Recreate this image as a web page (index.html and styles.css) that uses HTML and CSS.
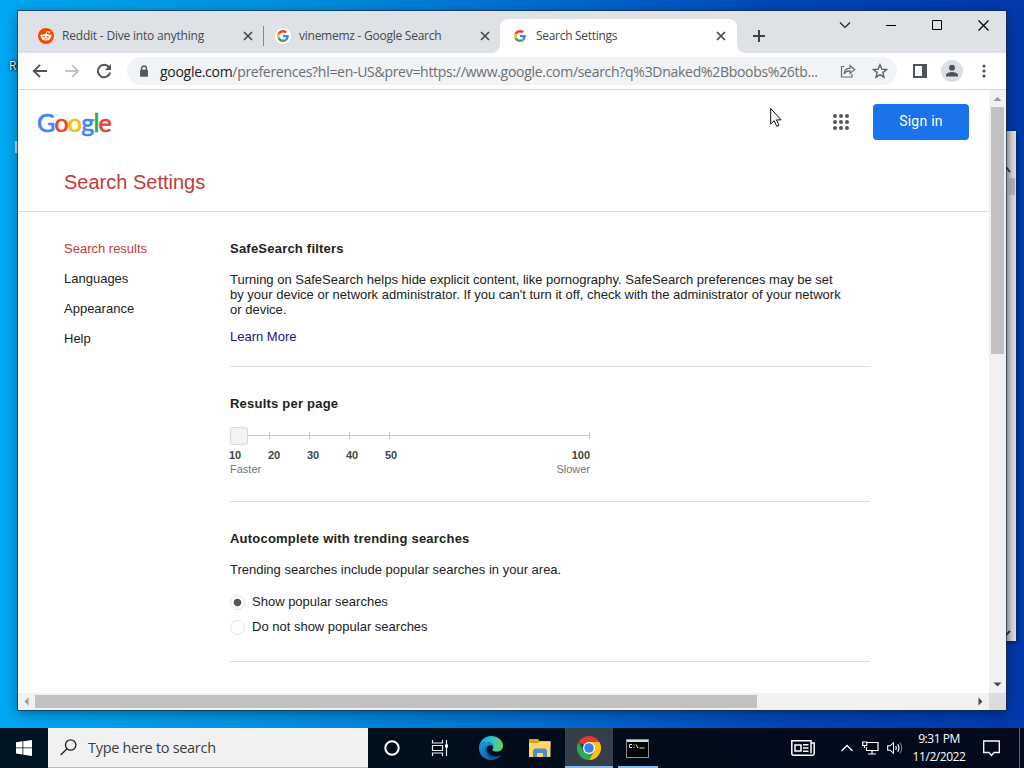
FILE: index.html
```html
<!DOCTYPE html>
<html lang="en">
<head>
    <meta charset="UTF-8">
    <title>Search Settings</title>
    <link rel="stylesheet" href="styles.css">
</head>
<body>
<svg width="0" height="0" class="defs">
    <symbol id="g" viewBox="0 0 48 48">
        <path fill="#EA4335" d="M24 9.5c3.54 0 6.71 1.22 9.21 3.6l6.85-6.85C35.9 2.38 30.47 0 24 0 14.62 0 6.51 5.38 2.56 13.22l7.98 6.19C12.43 13.72 17.74 9.5 24 9.5z"/>
        <path fill="#4285F4" d="M46.98 24.55c0-1.57-.15-3.09-.38-4.55H24v9.02h12.94c-.58 2.96-2.26 5.48-4.78 7.18l7.73 6c4.51-4.18 7.09-10.36 7.09-17.65z"/>
        <path fill="#FBBC05" d="M10.53 28.59c-.48-1.45-.76-2.99-.76-4.59s.27-3.14.76-4.59l-7.98-6.19C.92 16.46 0 20.12 0 24c0 3.88.92 7.54 2.56 10.78l7.97-6.19z"/>
        <path fill="#34A853" d="M24 48c6.48 0 11.93-2.13 15.89-5.81l-7.73-6c-2.15 1.45-4.92 2.3-8.16 2.3-6.26 0-11.57-4.22-13.47-9.91l-7.98 6.19C6.51 42.62 14.62 48 24 48z"/>
    </symbol>
    <symbol id="x" viewBox="0 0 10 10"><path d="M1 1l8 8M9 1l-8 8" stroke="#45494d" stroke-width="1.7"/></symbol>
</svg>

<div class="desktop">
    <span class="desktop-label">R</span>
    <span class="desktop-mark"></span>

    <div class="back-window">
        <svg class="back-up" width="10" height="12" viewBox="0 0 10 12"><path d="M0 3l4 5" stroke="#333" stroke-width="2"/></svg>
        <div class="back-thumb"></div>
        <svg class="back-down" width="10" height="12" viewBox="0 0 10 12"><path d="M0 8l4-4" stroke="#333" stroke-width="2"/></svg>
    </div>

    <div class="window">
        <div class="tabs">
            <div class="tab sep">
                <svg width="16" height="16" viewBox="0 0 16 16"><circle cx="8" cy="8" r="8" fill="#ff4500"/><path d="M8.2 6l.6-2.6 2 .5" stroke="#fff" stroke-width=".8" fill="none"/><circle cx="11.2" cy="4" r="1" fill="#fff"/><circle cx="3.6" cy="7.8" r="1.3" fill="#fff"/><circle cx="12.4" cy="7.8" r="1.3" fill="#fff"/><ellipse cx="8" cy="9.2" rx="4.6" ry="3.3" fill="#fff"/><circle cx="6.2" cy="8.6" r=".9" fill="#ff4500"/><circle cx="9.8" cy="8.6" r=".9" fill="#ff4500"/><path d="M6.2 10.6q1.8 1.1 3.6 0" stroke="#ff4500" stroke-width=".6" fill="none"/></svg>
                <span class="tab-title t1">Reddit - Dive into anything</span>
                <svg width="10" height="10"><use href="#x"/></svg>
            </div>
            <div class="tab">
                <span class="g-badge"><svg width="12" height="12"><use href="#g"/></svg></span>
                <span class="tab-title t2">vinememz - Google Search</span>
                <svg width="10" height="10"><use href="#x"/></svg>
            </div>
            <div class="tab active">
                <span class="g-badge"><svg width="12" height="12"><use href="#g"/></svg></span>
                <span class="tab-title t3">Search Settings</span>
                <svg width="10" height="10"><use href="#x"/></svg>
            </div>
            <svg class="new-tab" width="12" height="12" viewBox="0 0 12 12"><path d="M6 0v12M0 6h12" stroke="#3c4043" stroke-width="2"/></svg>
            <div class="controls">
                <span><svg width="12" height="12" viewBox="0 0 12 12"><path d="M1 3.5l5 5 5-5" fill="none" stroke="#222" stroke-width="1.2"/></svg></span>
                <span><svg width="10" height="10" viewBox="0 0 10 10"><path d="M0 5.5h10" stroke="#000"/></svg></span>
                <span><svg width="10" height="10" viewBox="0 0 10 10"><path d="M.5.5h9v9h-9z" fill="none" stroke="#000"/></svg></span>
                <span><svg width="11" height="11" viewBox="0 0 11 11"><path d="M.5.5l10 10M10.5.5l-10 10" stroke="#000" stroke-width="1.2"/></svg></span>
            </div>
        </div>

        <div class="toolbar">
            <span class="tool"><svg width="16" height="16" viewBox="0 0 16 16"><path d="M15 8H2M8 1.8L1.8 8 8 14.2" fill="none" stroke="#4f5357" stroke-width="1.9"/></svg></span>
            <span class="tool"><svg width="16" height="16" viewBox="0 0 16 16"><path d="M1 8h13M8 1.8L14.2 8 8 14.2" fill="none" stroke="#c0c3c6" stroke-width="1.9"/></svg></span>
            <span class="tool"><svg width="16" height="16" viewBox="0 0 16 16"><path d="M13 4.2A6.2 6.2 0 1 0 14.1 9.6" fill="none" stroke="#4f5357" stroke-width="2"/><path d="M15 1v6H9z" fill="#4f5357"/></svg></span>
            <div class="omnibox">
                <svg class="lock" width="10" height="13" viewBox="0 0 10 13"><path d="M2.6 5.5V3.4a2.4 2.4 0 0 1 4.8 0v2.1" fill="none" stroke="#55595d" stroke-width="1.4"/><rect x="1" y="4.8" width="8" height="7" rx="1" fill="#55595d"/></svg>
                <span class="url"><b>google.com</b>/preferences?hl=en-US&amp;prev=https://www.google.com/search?q%3Dnaked%2Bboobs%26tb...</span>
                <span class="tool"><svg width="16" height="16" viewBox="0 0 16 16"><path d="M4.500 3.500H1.500v10.500h10.500V11" fill="none" stroke="#666a6e" stroke-width="1.2"/><path d="M4 11c.5-4 2.500-5.700 6-5.900V2.500L14.700 6.500 10 10.400V7.900C7.300 7.900 5.500 8.700 4 11z" fill="none" stroke="#666a6e" stroke-width="1.2"/></svg></span>
                <span class="tool"><svg width="16" height="16" viewBox="0 0 16 16"><path d="M8 1.800l1.800 4.300 4.700.4-3.600 3.100 1.100 4.600L8 11.700l-4 2.500 1.100-4.600L1.500 6.500l4.700-.4z" fill="none" stroke="#5f6368" stroke-width="1.400"/></svg></span>
            </div>
            <span class="tool"><svg width="14" height="14" viewBox="0 0 14 14"><path d="M1 1h12v12H1z" fill="none" stroke="#4f5357" stroke-width="2"/><path d="M9 1h4v12H9z" fill="#4f5357"/></svg></span>
            <span class="tool"><svg width="22" height="22" viewBox="0 0 22 22"><circle cx="11" cy="11" r="11" fill="#dcdfe5"/><circle cx="11" cy="7.700" r="3" fill="#4b5361"/><path d="M5 16.500v-1.500c0-2 4-3 6-3s6 1 6 3v1.500z" fill="#4b5361"/></svg></span>
            <span class="tool"><svg width="4" height="14" viewBox="0 0 4 14"><g fill="#4f5357"><circle cx="2" cy="2" r="1.600"/><circle cx="2" cy="7" r="1.600"/><circle cx="2" cy="12" r="1.600"/></g></svg></span>
        </div>

        <div class="viewport">
            <div class="page">
                <div class="header">
                    <div class="logo"><span class="blue">G</span><span class="red">o</span><span class="yellow">o</span><span class="blue">g</span><span class="green">l</span><span class="red">e</span></div>
                    <div class="apps"><i></i><i></i><i></i><i></i><i></i><i></i><i></i><i></i><i></i></div>
                    <a class="sign-in">Sign in</a>
                </div>
                <h1>Search Settings</h1>
                <div class="columns">
                    <div class="nav">
                        <a class="current">Search results</a>
                        <a>Languages</a>
                        <a>Appearance</a>
                        <a>Help</a>
                    </div>
                    <div class="settings">
                        <div class="section safe">
                            <h2>SafeSearch filters</h2>
                            <p>Turning on SafeSearch helps hide explicit content, like pornography. SafeSearch preferences may be set<br>by your device or network administrator. If you can't turn it off, check with the administrator of your network<br>or device.</p>
                            <a class="more">Learn More</a>
                        </div>
                        <div class="section results">
                            <h2>Results per page</h2>
                            <svg class="slider" width="360" height="18" viewBox="0 0 360 18"><path d="M18 8.500h342M39.500 5v7M79.500 5v7M119.500 5v7M159.500 5v7M359.500 5v7" stroke="#c8c8c8" fill="none"/><rect x=".5" y=".5" width="17" height="17" rx="1.500" fill="#f3f3f3" stroke="#d8d8d8"/></svg>
                            <div class="numbers"><b>10</b><b>20</b><b>30</b><b>40</b><b>50</b><b>100</b></div>
                            <div class="speeds"><span>Faster</span><span>Slower</span></div>
                        </div>
                        <div class="section auto">
                            <h2>Autocomplete with trending searches</h2>
                            <p>Trending searches include popular searches in your area.</p>
                            <div class="option"><span class="radio on"></span>Show popular searches</div>
                            <div class="option"><span class="radio"></span>Do not show popular searches</div>
                        </div>
                    </div>
                </div>
            </div>
            <div class="vscroll">
                <svg width="9" height="17" viewBox="0 0 9 17"><path d="M.5 11l4-4 4 4z" fill="#9a9a9a"/></svg>
                <div class="thumb"></div>
                <svg width="9" height="17" viewBox="0 0 9 17"><path d="M.5 6.500l4 4 4-4z" fill="#4a4a4a"/></svg>
            </div>
            <div class="hscroll">
                <svg width="17" height="9" viewBox="0 0 17 9"><path d="M10.500.5l-4 4 4 4z" fill="#9a9a9a"/></svg>
                <div class="thumb"></div>
                <svg width="17" height="9" viewBox="0 0 17 9"><path d="M6.500.5l4 4-4 4z" fill="#4a4a4a"/></svg>
            </div>
            <div class="corner"></div>
        </div>
    </div>

    <svg class="cursor" width="13" height="20" viewBox="0 0 13 20"><path d="M.7 1.500v15.500l3.500-3.300 2.500 5.600 2.300-1-2.500-5.400h4.700z" fill="#fff" stroke="#111"/></svg>

    <div class="taskbar">
        <div class="start"><svg width="16" height="16" viewBox="0 0 16 16"><path d="M0 2.200L6.500 1.300V7.500H0zM7.300 1.200L16 0v7.500H7.300zM0 8.300h6.500v6.200L0 13.600zM7.300 8.300H16V16l-8.700-1.300z" fill="#fff"/></svg></div>
        <div class="search">
            <svg width="17" height="17" viewBox="0 0 17 17"><circle cx="10.700" cy="6" r="5.200" fill="none" stroke="#222" stroke-width="1.300"/><path d="M7 9.800L.7 16" stroke="#222" stroke-width="1.300"/></svg>
            <span>Type here to search</span>
        </div>
        <div class="task"><svg width="16" height="16" viewBox="0 0 16 16"><circle cx="8" cy="8" r="6.700" fill="none" stroke="#fff" stroke-width="2"/></svg></div>
        <div class="task"><svg width="18" height="18" viewBox="0 0 18 18"><g fill="none" stroke="#e8ecef" stroke-width="1.200"><path d="M1.500 1v3h10V1M1.500 17v-3h10v3M1.500 6.500h10v5h-10zM15.500 1v16"/></g><path d="M14 5.500h3v3h-3z" fill="#fff"/></svg></div>
        <div class="task edge"><svg width="24" height="24" viewBox="0 0 24 24">
            <defs>
                <linearGradient id="eg" x1="0" y1=".3" x2="1" y2=".4"><stop offset="0" stop-color="#1e9fe0"/><stop offset=".5" stop-color="#2cc1cf"/><stop offset="1" stop-color="#63d663"/></linearGradient>
                <linearGradient id="eb" x1="0" y1="0" x2=".6" y2="1"><stop offset="0" stop-color="#1b9de2"/><stop offset="1" stop-color="#0f5cae"/></linearGradient>
            </defs>
            <path d="M0 12C0 5 5.500 0 12 0c7 0 12 4.500 12 9.600 0 4-3 6-6.400 6-2.800 0-4.300-.9-4.300-1.900 0-.7 1-1.100 1-2.700C14.300 8.300 11.500 6 7.500 6 4 6 1 8 0 12z" fill="url(#eg)"/>
            <path d="M0 12c.7-4 4-6 7.500-6 3.600 0 6.500 2 6.800 4.500-.6-.9-1.700-1.300-2.900-1.300-2.300 0-3.900 2-3.900 4.600 0 4.600 4 7.700 8.200 7.500 2.500 0 4.700-1 6.600-2.500C20 22 16.500 24 12 24 5 24 0 18.500 0 12z" fill="url(#eb)"/>
            <path d="M7.500 8.500c-3.400 5.500-.5 12.500 4.500 15.500 4 0 7.500-1.500 10.300-5.200-3 2-7.300 2-10.300.2-4-2.500-5.200-6.500-4.500-10.500z" fill="#124f9b" opacity=".75"/>
        </svg></div>
        <div class="task"><svg width="22" height="18" viewBox="0 0 22 18"><path d="M0 0h9l1.500 2H21.500v5H0z" fill="#dba520"/><path d="M0 4h10l1-1.500h10.500V18H0z" fill="#fcd668"/><path d="M4 18v-6.500l1.500-2h11l1.500 2V18h-4v-4H8v4z" fill="#4a90cf"/></svg></div>
        <div class="task open selected"><svg width="24" height="24" viewBox="0 0 24 24"><path d="M12 12L1.600 6A12 12 0 0 1 22.400 6z" fill="#e33b2e"/><path d="M12 12V6h10.400A12 12 0 0 1 12 24l5.200-9z" fill="#fbc116"/><path d="M12 12l5.200 3L12 24A12 12 0 0 1 1.600 6l5.200 9z" fill="#2da94f"/><circle cx="12" cy="12" r="6" fill="#fff"/><circle cx="12" cy="12" r="4.800" fill="#3b7ded"/></svg></div>
        <div class="task open cmd"><svg width="23" height="19" viewBox="0 0 23 19"><rect x=".5" y=".5" width="22" height="18" fill="#050505" stroke="#8c9092"/><path d="M1 1h21v2H1z" fill="#d8dadb"/><path d="M6 5.500H3.500v3H6M8 5.500v1M8 8v1M10 5.500l2 3.500M13.500 9h5" fill="none" stroke="#ddd"/></svg></div>

        <div class="tray">
            <svg class="news" width="24" height="16" viewBox="0 0 24 16"><g fill="none" stroke="#fff" stroke-width="1.500"><path d="M20 3h3.200v10.500q0 1.700-1.700 1.700h-19Q.8 15.200.8 13.500V.8H20v12.500"/><path d="M4 5h6v6H4zM12 4.800h5.500M12 8h5.500M12 11.200h5.500"/></g></svg>
            <svg class="up" width="12" height="8" viewBox="0 0 12 8"><path d="M.5 7L6 1.500 11.500 7" fill="none" stroke="#fff" stroke-width="1.300"/></svg>
            <svg class="net" width="17" height="14" viewBox="0 0 17 14"><path d="M5 1.500h11v8H4.500V6M10 9.500V13M6 13h8M.7 1h4v3.500h-4zM2.500 4.500V7" fill="none" stroke="#fff" stroke-width="1.200"/></svg>
            <svg class="vol" width="16" height="14" viewBox="0 0 16 14"><path d="M.7 4.800h2.500L6.500 1.700v10.600L3.200 9.200H.7z" fill="none" stroke="#fff" stroke-width="1.100"/><path d="M8.700 5q1.300 2 0 4M10.700 3.300q2.500 3.700 0 7.400" fill="none" stroke="#fff" stroke-width="1.200"/><path d="M13 1.700q3.500 5.300 0 10.600" fill="none" stroke="#8b949d"/></svg>
            <div class="clock"><div>9:31 PM</div><div class="date">11/2/2022</div></div>
            <svg class="note" width="17" height="17" viewBox="0 0 17 17"><path d="M.7 1h15.600v11.500H11L8.500 15.500 6 12.500H.7z" fill="none" stroke="#fff" stroke-width="1.300"/></svg>
            <span class="peek"></span>
        </div>
    </div>
</div>
</body>
</html>
```
FILE: styles.css
```css
* { box-sizing: border-box; }
body { margin: 0; font-family: "Liberation Sans", Arial, sans-serif; font-size: 13px; color: #222; }
svg { display: block; flex: none; }
.defs { position: absolute; }

.desktop { position: relative; width: 1024px; height: 768px; overflow: hidden; background: linear-gradient(90deg, #00a8f3 0, #009ee8 120px, #008fdf 300px, #0064ca 600px, #0046b7 780px, #0039ab 1024px); }
.desktop-label { position: absolute; left: 9px; top: 58px; color: #fff; font: 12px/16px "Open Sans", sans-serif; text-shadow: 1px 1px 2px #000, 0 0 3px #000; }
.desktop-mark { position: absolute; left: 15px; top: 141px; width: 3px; height: 12px; background: #b5dcf3; }
.back-window { position: absolute; left: 1000px; top: 131px; width: 16px; height: 510px; padding: 33px 0 2px 6px; display: flex; flex-direction: column; background: linear-gradient(90deg, #aaa 6px, #d8d8d8 12px, #e2e2e2); box-shadow: 1px 1px 5px rgba(0, 0, 0, 0.5); }
.back-thumb { height: 17px; margin: 2px 1px 0 0; background: #b5b5b5; }
.back-down { margin-top: auto; }

/* browser window */
.window { position: absolute; left: 18px; top: 11px; width: 988px; height: 699px; background: #fff; box-shadow: 0 0 0 1px rgba(20, 40, 60, 0.65), 0 3px 12px rgba(0, 0, 0, 0.4); }
.tabs { display: flex; align-items: flex-end; height: 42px; padding-left: 8px; background: #dee1e6; }
.tab { position: relative; display: flex; align-items: center; width: 237px; height: 34px; padding: 0 10px 0 12px; }
.sep::after { content: ""; position: absolute; right: -1px; top: 7px; width: 1px; height: 20px; background: #85888c; }
.active { padding-right: 11px; background: #fff; border-radius: 8px 8px 0 0; }
.active::before, .active::after { content: ""; position: absolute; bottom: 0; width: 8px; height: 8px; }
.active::before { left: -8px; background: radial-gradient(circle at 0 0, #dee1e6 7.5px, #fff 8px); }
.active::after { right: -8px; background: radial-gradient(circle at 100% 0, #dee1e6 7.5px, #fff 8px); }
.g-badge { display: flex; align-items: center; justify-content: center; width: 16px; height: 16px; border-radius: 8px; background: #fff; }
.tab-title { flex: 1; margin-left: 8px; font: 12px/16px "Open Sans", sans-serif; color: #45494d; white-space: nowrap; }
.t1 { letter-spacing: -0.2px; }
.t2 { letter-spacing: -0.25px; }
.t3 { letter-spacing: -0.3px; }
.new-tab { margin: 0 0 11px 16px; }
.controls { display: flex; align-self: flex-start; margin-left: auto; }
.controls span { display: flex; align-items: center; justify-content: center; width: 46px; height: 28px; }

.toolbar { display: flex; align-items: center; height: 37px; padding: 0 6px; border-bottom: 1px solid #d5d7da; }
.tool { display: flex; align-items: center; justify-content: center; width: 32px; height: 28px; flex: none; }
.omnibox { display: flex; align-items: center; width: 770px; height: 28px; margin: 0 7px; padding: 0 1px 0 12px; border-radius: 14px; background: #f1f3f4; }
.url { width: 660px; margin: 1px auto 0 11px; font: 14px/20px "Open Sans", sans-serif; letter-spacing: -0.29px; color: #6b6f74; white-space: nowrap; }
.url b { font-weight: normal; color: #202124; }

.viewport { display: grid; grid-template-columns: 971px 17px; grid-template-rows: 603px 17px; }
.vscroll { display: flex; flex-direction: column; align-items: center; background: #f1f1f1; }
.vscroll .thumb { width: 13px; height: 247px; margin-bottom: auto; background: #c1c1c1; }
.hscroll { display: flex; align-items: center; background: #f1f1f1; }
.hscroll .thumb { width: 722px; height: 13px; margin-right: auto; background: #c1c1c1; }
.corner { background: #dcdcdc; }

/* settings page */
.header { display: flex; align-items: center; height: 64px; padding: 0 20px 0 19px; }
.logo { margin-right: auto; font: 25px/30px Lato, sans-serif; letter-spacing: -0.75px; -webkit-text-stroke: 0.7px; }
.blue { color: #4285f4; }
.red { color: #ea4335; }
.yellow { color: #fbbc05; }
.green { color: #34a853; }
.apps { display: grid; grid-template-columns: repeat(3, 4px); gap: 2px; margin-right: 24px; }
.apps i { width: 4px; height: 4px; border-radius: 2px; background: #55595d; }
.sign-in { width: 96px; height: 36px; border-radius: 4px; background: #1a73e8; color: #fff; font: 14px/35px Roboto, sans-serif; letter-spacing: 0.25px; text-align: center; }
h1 { height: 58px; margin: 0; padding-left: 46px; border-bottom: 1px solid #dcdcdc; color: #c5393c; font-size: 20px; font-weight: normal; line-height: 56px; }
.columns { display: flex; line-height: 15px; white-space: nowrap; }
.nav { display: flex; flex-direction: column; gap: 15px; width: 212px; padding: 29px 0 0 46px; }
.current { color: #c5393c; }
.settings { width: 640px; }
.section { padding-top: 29px; border-bottom: 1px solid #dcdcdc; }
h2 { margin: 0 0 16px; font-size: 13px; line-height: 15px; letter-spacing: 0.22px; }
p { margin: 0; }
.safe { padding-bottom: 22px; }
.more { display: block; margin-top: 12px; color: #1a0f8c; }
.results { padding-bottom: 25px; }
.numbers { display: flex; width: 361px; margin: 3px 0 0 -1px; font-size: 11px; line-height: 14px; color: #444; }
.numbers b { width: 39px; }
.numbers b:last-child { width: auto; margin-left: auto; }
.speeds { display: flex; justify-content: space-between; width: 360px; font-size: 11px; line-height: 14px; color: #70757a; }
.auto { padding-bottom: 27px; }
.auto p { margin-bottom: 17px; }
.option { display: flex; align-items: center; height: 15px; }
.option + .option { margin-top: 10px; }
.radio { width: 15px; height: 15px; margin: 2px 7px 0 0; border: 1px solid #e2e2e2; border-radius: 50%; }
.on { background: radial-gradient(circle, #555 3.4px, #fff 4.2px); }

.cursor { position: absolute; left: 770px; top: 107px; }

/* taskbar */
.taskbar { position: absolute; left: 0; bottom: 0; display: flex; width: 1024px; height: 40px; background: linear-gradient(90deg, #001625, #010d1a 500px, #020a1c); color: #fff; }
.start, .task { position: relative; display: flex; align-items: center; justify-content: center; width: 48px; height: 40px; }
.search { display: flex; align-items: center; width: 320px; padding-left: 12px; background: #f1f1f1; border-bottom: 1px solid #bbb; color: #3c3c3c; font: 14.500px/20px "Open Sans", sans-serif; }
.search span { margin: 1px 0 0 11px; letter-spacing: -0.3px; white-space: nowrap; }
.edge { margin-left: 3px; }
.edge ~ .task { margin-left: 1px; }
.cmd { padding-right: 2px; }
.selected { background: #343f4a; }
.open::after { content: ""; position: absolute; left: 4px; right: 4px; bottom: 0; height: 2px; background: #83bdea; }
.selected::after { left: 0; right: 0; }
.tray { display: flex; align-items: center; margin-left: auto; }
.up { margin-left: 26px; }
.net { margin-left: 9px; }
.vol { margin-left: 8px; }
.clock { width: 62px; margin: 0 13px 0 5px; text-align: center; font: 12px/18px "Open Sans", sans-serif; letter-spacing: -0.45px; }
.note { margin-right: 19px; }
.peek { width: 1px; height: 40px; margin-right: 4px; background: #5b6673; }
```
